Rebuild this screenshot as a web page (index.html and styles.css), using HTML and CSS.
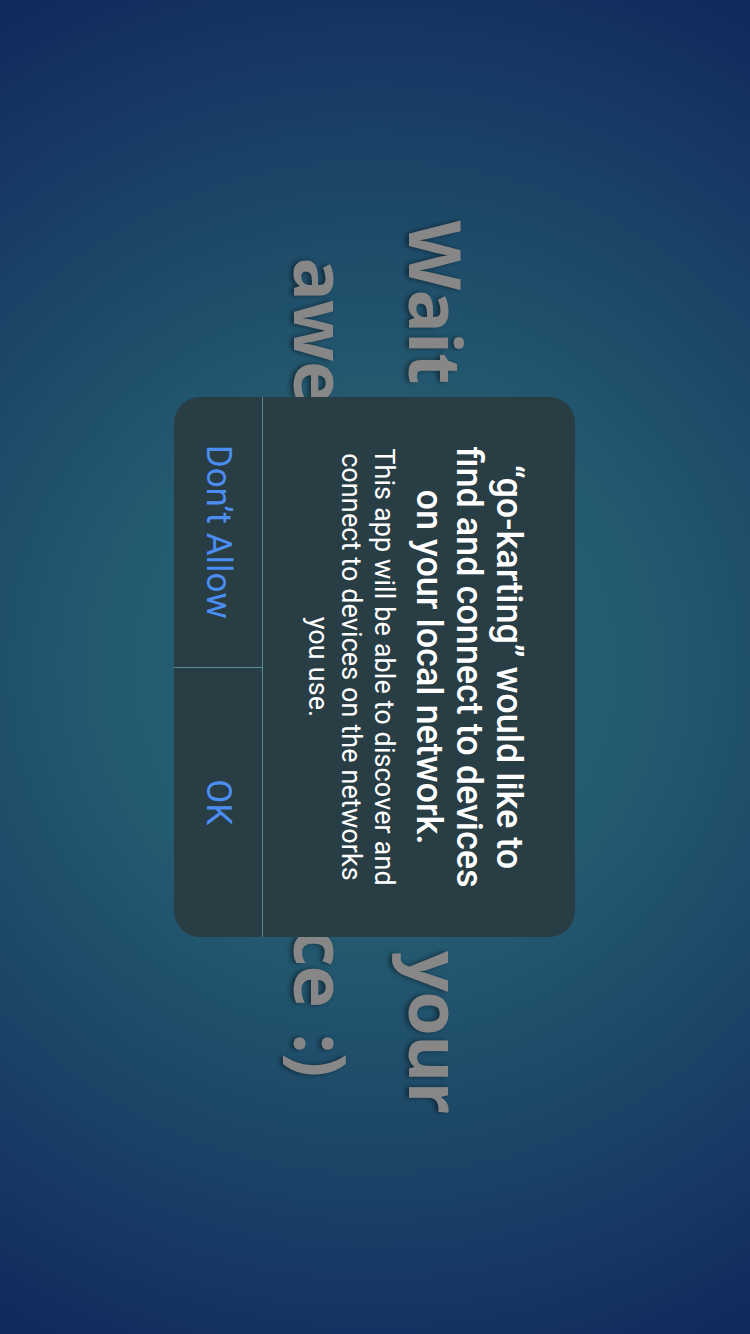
FILE: index.html
```html
<!DOCTYPE html>
<html lang="en">
<head>
<meta charset="utf-8">
<title>go-karting</title>
<link rel="stylesheet" href="styles.css">
</head>
<body>
<div class="screen">
  <div class="stage">
    <div class="bg-text">
      <p class="bg-line bg-line-1">Wait a moment for your</p>
      <p class="bg-line bg-line-2">awesome experience :)</p>
    </div>
    <div class="overlay">
      <div class="alert">
        <div class="alert-content">
          <h1 class="alert-title">“go-karting” would like to<br>find and connect to devices<br>on your local network.</h1>
          <p class="alert-message">This app will be able to discover and<br>connect to devices on the networks<br>you use.</p>
        </div>
        <div class="alert-actions">
          <button class="alert-btn">Don’t Allow</button>
          <button class="alert-btn">OK</button>
        </div>
      </div>
    </div>
  </div>
</div>
</body>
</html>
```
FILE: styles.css
```css
html, body {
  margin: 0;
  padding: 0;
  width: 750px;
  height: 1334px;
  overflow: hidden;
  background: #112b5c;
}

.screen {
  width: 750px;
  height: 1334px;
  overflow: hidden;
}

.stage {
  position: relative;
  width: 1334px;
  height: 750px;
  transform-origin: 0 0;
  transform: rotate(90deg) translateY(-100%);
  background: radial-gradient(circle farthest-corner at 50% 50%, #2a6474 0%, #245a70 35%, #1c4868 60%, #153462 85%, #10285a 100%);
  overflow: hidden;
}

.bg-text {
  padding-top: 256px;
  text-align: center;
  font-family: "Open Sans", "DejaVu Sans", sans-serif;
  font-weight: 700;
  font-size: 72px;
  line-height: 115px;
  letter-spacing: -0.8px;
  color: #878787;
  text-shadow: 0 3px 5px rgba(0, 0, 0, 0.45);
  filter: blur(0.6px);
}

.bg-line {
  margin: 0;
  white-space: nowrap;
}

.bg-line-1 {
  word-spacing: 12px;
}

.bg-line-2 {
  word-spacing: 8px;
}

.overlay {
  position: absolute;
  inset: 0;
  display: flex;
  align-items: center;
  justify-content: center;
}

.alert {
  width: 540px;
  height: 401px;
  background: #293d45;
  border-radius: 26px;
  overflow: hidden;
  display: flex;
  flex-direction: column;
  font-family: Roboto, "Liberation Sans", sans-serif;
  color: #ffffff;
}

.alert-content {
  flex: 1;
  padding: 46px 24px 0;
  text-align: center;
}

.alert-title {
  margin: 0;
  font-size: 36px;
  font-weight: 500;
  line-height: 40px;
}

.alert-message {
  margin: 9px 0 0;
  font-size: 27px;
  font-weight: 400;
  line-height: 33px;
  letter-spacing: 0.1px;
}

.alert-actions {
  height: 88px;
  display: flex;
  border-top: 1px solid #5b8c95;
}

.alert-btn {
  flex: 1;
  margin: 0;
  padding: 0;
  border: 0;
  background: transparent;
  color: #4c8df2;
  font-family: Roboto, "Liberation Sans", sans-serif;
  font-size: 35px;
  font-weight: 400;
}

.alert-btn + .alert-btn {
  border-left: 1px solid #5b8c95;
}
```
